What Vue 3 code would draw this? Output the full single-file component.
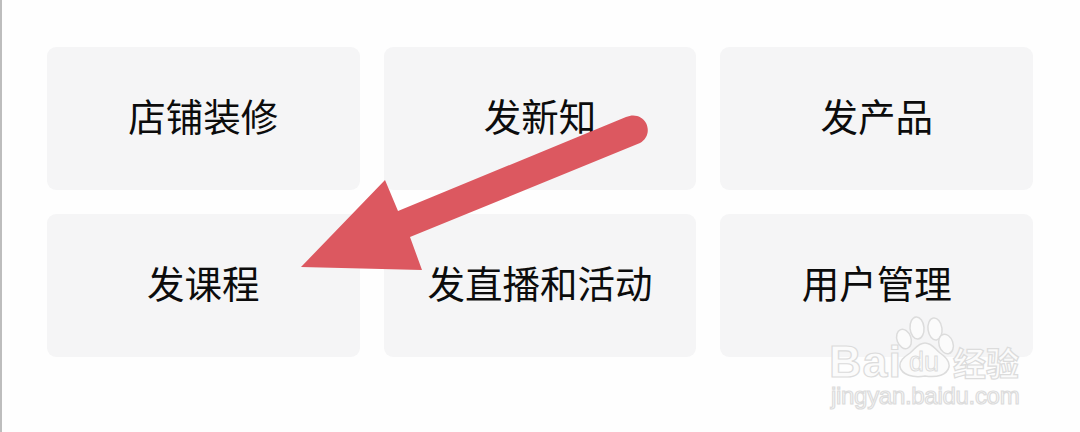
<script setup>
const items = ['店铺装修', '发新知', '发产品', '发课程', '发直播和活动', '用户管理']
</script>

<template>
  <div class="page">
    <div class="grid">
      <div v-for="item in items" :key="item" class="card">{{ item }}</div>
    </div>
    <svg class="arrow" width="1080" height="432" viewBox="0 0 1080 432" aria-hidden="true">
      <path class="arrow-fill" d="M301 267 L385 180 L398 211 L626 117 C634 113.500 642 116 646 123 C650 131 647 139 640 143 L410 237 L422 270 Z" />
    </svg>
    <div class="mark">
      <div class="mark-top">
        <span class="bai">Bai</span>
        <svg class="paw" width="62" height="62" viewBox="0 0 62 62" aria-hidden="true">
          <g class="paw-line">
            <ellipse cx="9" cy="23" rx="7" ry="10" transform="rotate(-20 9 23)" />
            <ellipse cx="22" cy="12" rx="7" ry="11" transform="rotate(-5 22 12)" />
            <ellipse cx="40" cy="13" rx="7" ry="11" transform="rotate(-8 40 13)" />
            <ellipse cx="51" cy="28" rx="7" ry="10" transform="rotate(-18 51 28)" />
            <path d="M30 27 C37 27 40 33 45 37 C51 41 55 45 54 51 C52 59 42 62 30 60 C18 62 7 59 5 51 C4 45 9 41 15 37 C20 33 23 27 30 27 Z" />
          </g>
          <text class="du" x="29" y="55">du</text>
        </svg>
        <span class="cn">经验</span>
      </div>
      <div class="url">jingyan.baidu.com</div>
    </div>
  </div>
</template>

<style>
html, body { margin: 0; background: #fff; }
</style>

<style scoped>
.page {
  position: relative;
  box-sizing: border-box;
  width: 1080px;
  height: 432px;
  overflow: hidden;
  background: #fefefe;
  border-left: 2px solid #bdbdbd;
  padding: 47px 47px 0 45px;
  font-family: "Noto Sans CJK SC", "Liberation Sans", sans-serif;
}
.grid {
  display: grid;
  grid-template-columns: repeat(3, 1fr);
  grid-auto-rows: 143px;
  gap: 24px;
}
.card {
  display: flex;
  align-items: center;
  justify-content: center;
  padding-bottom: 7px;
  box-sizing: border-box;
  background: #f5f5f6;
  border-radius: 9px;
  color: #0c0c0c;
  font-size: 37.500px;
  line-height: 1;
}
.arrow {
  position: absolute;
  left: -2px;
  top: 0;
}
.arrow-fill { fill: #dc5860; }
.mark {
  position: absolute;
  left: 827px;
  top: 316px;
  width: 200px;
  color: #fbfbfb;
  -webkit-text-stroke: 1.200px #dcdcdc;
  font-family: "Liberation Sans", sans-serif;
}
.mark-top {
  display: flex;
  align-items: flex-end;
  height: 66px;
}
.bai {
  font-size: 45px;
  line-height: 50px;
  font-weight: 700;
  letter-spacing: 1px;
  width: 66px;
  flex: none;
  margin-bottom: -5px;
}
.paw {
  flex: none;
  margin-right: -4px;
  margin-bottom: 4px;
}
.paw-line {
  fill: #fbfbfb;
  stroke: #dcdcdc;
  stroke-width: 1.500;
}
.du {
  font-size: 27px;
  text-anchor: middle;
  fill: #fbfbfb;
  stroke: #dcdcdc;
  stroke-width: 1;
}
.cn {
  font-family: "Noto Sans CJK SC", sans-serif;
  font-size: 33px;
  line-height: 46px;
  font-weight: 700;
  flex: none;
  margin-bottom: -3px;
}
.url {
  padding-left: 2px;
  font-size: 24px;
  line-height: 28px;
  letter-spacing: -0.300px;
  white-space: nowrap;
}
</style>
